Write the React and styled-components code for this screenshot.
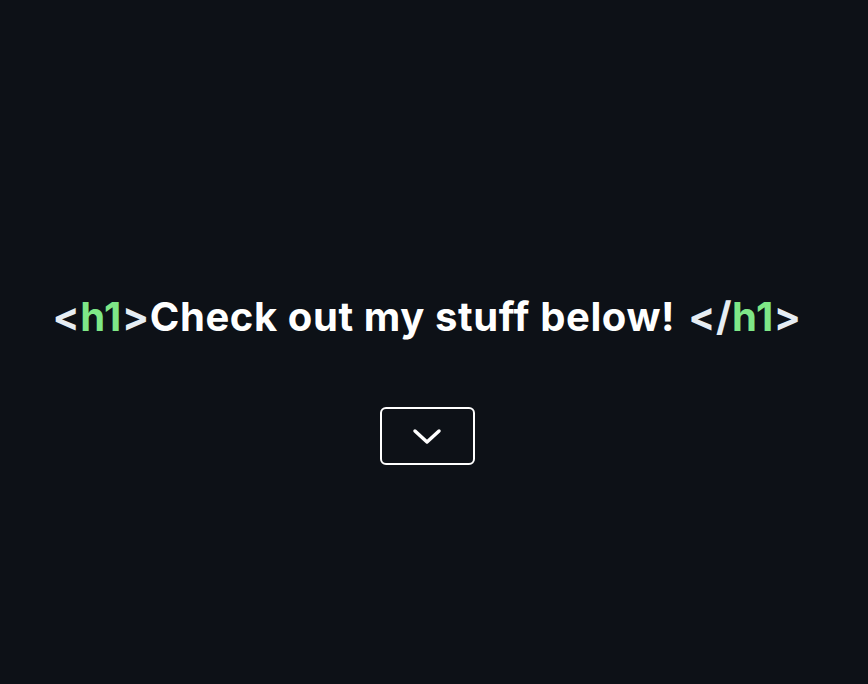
import React from 'react';
import styled, { createGlobalStyle } from 'styled-components';

const GlobalStyle = createGlobalStyle`
  html, body {
    margin: 0;
    padding: 0;
    background-color: #0d1117;
  }
  body {
    font-family: Inter, "Noto Sans", sans-serif;
  }
`;

const Page = styled.main`
  min-height: 684px;
  display: flex;
  flex-direction: column;
  align-items: center;
  padding-top: 294px;
  padding-right: 14px;
  box-sizing: border-box;
`;

const Heading = styled.h1`
  margin: 0;
  color: #ffffff;
  font-size: 40px;
  font-weight: 700;
  line-height: 46px;
  letter-spacing: 0.6px;
  white-space: nowrap;
`;

const Tag = styled.span`
  color: #e6edf3;
`;

const TagName = styled.span`
  color: #7ee787;
`;

const Gap = styled.span`
  display: inline-block;
  width: 13px;
`;

const DownButton = styled.button`
  margin-top: 67px;
  width: 95px;
  height: 58px;
  display: flex;
  align-items: center;
  justify-content: center;
  background: transparent;
  border: 2px solid #ffffff;
  border-radius: 6px;
  color: #ffffff;
  cursor: pointer;
  padding: 0;
`;

const App = () => {
  return (
    <>
      <GlobalStyle />
      <Page>
        <Heading>
          <Tag>&lt;</Tag>
          <TagName>h1</TagName>
          <Tag>&gt;</Tag>
          Check out my stuff below!
          <Gap />
          <Tag>&lt;/</Tag>
          <TagName>h1</TagName>
          <Tag>&gt;</Tag>
        </Heading>
        <DownButton aria-label="Scroll down">
          <svg width="30" height="18" viewBox="0 0 30 18" fill="none">
            <path d="M3 4 L15 15 L27 4" stroke="currentColor" strokeWidth="3.5" strokeLinecap="round" strokeLinejoin="round" />
          </svg>
        </DownButton>
      </Page>
    </>
  );
};

export default App;
